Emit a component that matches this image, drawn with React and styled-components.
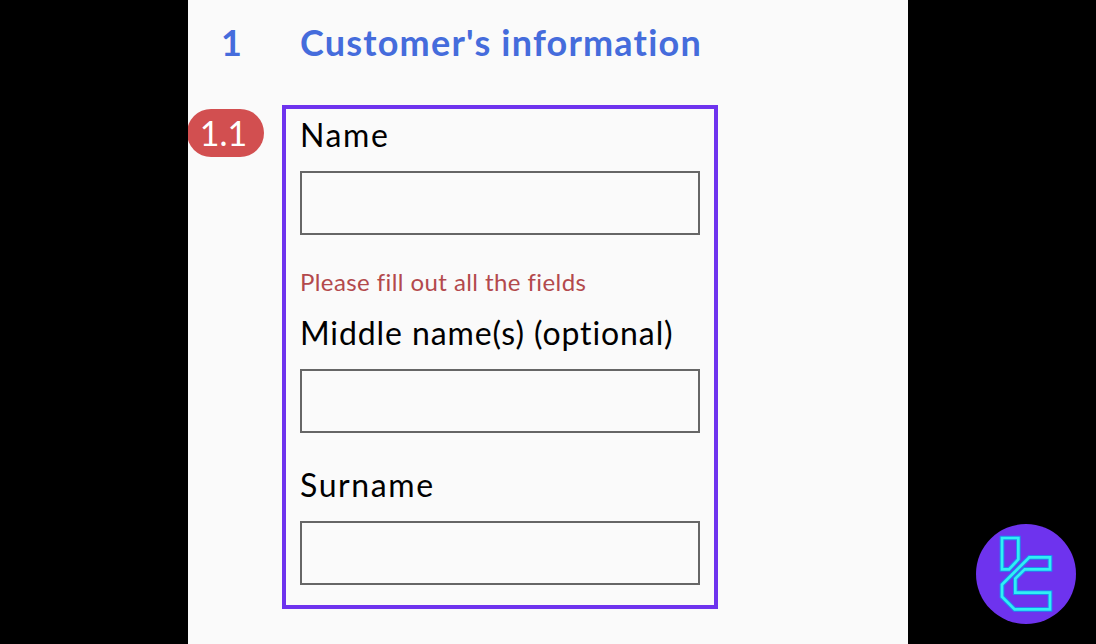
import React from "react";
import styled, { createGlobalStyle } from "styled-components";

const Global = createGlobalStyle`
  html, body { margin: 0; padding: 0; background: #000; }
  body {
    font-family: "Lato", "Noto Sans", "Liberation Sans", sans-serif;
    font-variant-ligatures: none;
  }
`;

const Page = styled.div`
  position: relative;
  width: 1096px;
  height: 644px;
  overflow: hidden;
  background: #000;
  display: flex;
  justify-content: center;
`;

const Sheet = styled.main`
  width: 720px;
  height: 644px;
  background: #fafafa;
  overflow: hidden;
  display: flex;
  flex-direction: column;
`;

const Heading = styled.h2`
  margin: 0;
  height: 105px;
  padding: 21px 0 0 33px;
  box-sizing: border-box;
  display: flex;
  align-items: flex-start;
  gap: 67px;
  color: #456cdc;
  font-size: 36px;
  line-height: 43px;
  font-weight: 700;
`;

const HeadingNumber = styled.span`
  width: 12px;
`;

const HeadingTitle = styled.span`
  letter-spacing: 1.2px;
`;

const Row = styled.div`
  display: flex;
  align-items: flex-start;
`;

const Badge = styled.div`
  width: 77px;
  height: 48px;
  margin: 4px 18px 0 -1px;
  padding-right: 4px;
  box-sizing: border-box;
  border-radius: 24px;
  background: #d24f50;
  color: #fff;
  font-size: 34px;
  font-weight: 400;
  line-height: 48px;
  text-align: center;
`;

const Box = styled.section`
  width: 436px;
  height: 504px;
  box-sizing: border-box;
  border: 4px solid #6e33ee;
  padding: 4px 14px 0;
  display: flex;
  flex-direction: column;
`;

const Label = styled.label`
  display: block;
  height: 46px;
  margin-bottom: 12px;
  color: #000;
  font-size: 32px;
  line-height: 44px;
  font-weight: 400;
  letter-spacing: ${(p) => p.$tracking}px;
`;

const Field = styled.input`
  display: block;
  width: 400px;
  height: 64px;
  flex: none;
  box-sizing: border-box;
  border: 2px solid #666;
  border-radius: 0;
  background: #fafafa;
  outline: none;
`;

const ErrorText = styled.p`
  margin: 31px 0 0;
  height: 45px;
  color: #b3494c;
  font-size: 24px;
  line-height: 32px;
  letter-spacing: 0.42px;
`;

const Group = styled.div`
  margin-top: ${(p) => p.$top}px;
`;

const LogoWrap = styled.div`
  position: absolute;
  right: 10px;
  bottom: 10px;
  width: 120px;
  height: 120px;
`;

const Logo = () => (
  <svg width="120" height="120" viewBox="0 0 360 360" aria-hidden="true">
    <circle cx="180" cy="180" r="150" fill="#6e33ee" />
    <g fill="none" strokeLinejoin="miter">
      <path d="M108 72H157V136L129 166H108Z" stroke="#1c8cf0" strokeWidth="14" />
      <path d="M190 130H252V166H176L148 194V236H252V286H146L108 248V212Z" stroke="#1c8cf0" strokeWidth="14" />
      <path d="M108 72H157V136L129 166H108Z" stroke="#2ff0f4" strokeWidth="8" />
      <path d="M190 130H252V166H176L148 194V236H252V286H146L108 248V212Z" stroke="#2ff0f4" strokeWidth="8" />
    </g>
  </svg>
);

export default function App() {
  return (
    <>
      <Global />
      <Page>
        <Sheet>
          <Heading>
            <HeadingNumber>1</HeadingNumber>
            <HeadingTitle>Customer's information</HeadingTitle>
          </Heading>
          <Row>
            <Badge>1.1</Badge>
            <Box>
              <Group $top={0}>
                <Label $tracking={1.6}>Name</Label>
                <Field />
              </Group>
              <ErrorText>Please fill out all the fields</ErrorText>
              <Group $top={0}>
                <Label $tracking={0.9}>Middle name(s) (optional)</Label>
                <Field />
              </Group>
              <Group $top={30}>
                <Label $tracking={1.6}>Surname</Label>
                <Field />
              </Group>
            </Box>
          </Row>
        </Sheet>
        <LogoWrap><Logo /></LogoWrap>
      </Page>
    </>
  );
}
